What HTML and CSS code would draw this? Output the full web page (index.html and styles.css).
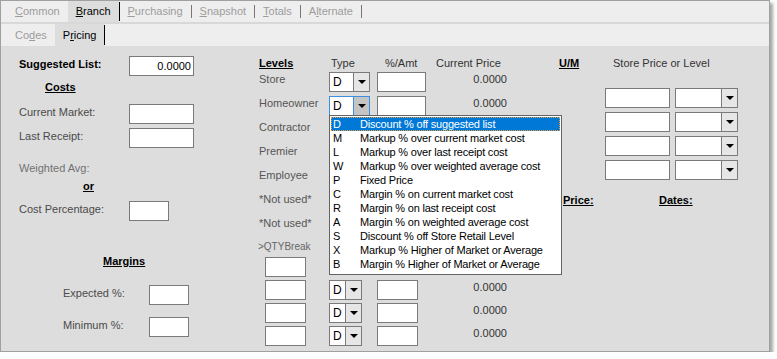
FILE: index.html
```html
<!DOCTYPE html>
<html lang="en">
<head>
    <meta charset="UTF-8">
    <title>Branch Pricing</title>
    <link rel="stylesheet" href="styles.css">
</head>
<body>
    <div class="window">
        <div class="tabs tabs-main">
            <span class="tab"><u>C</u>ommon</span>
            <span class="tab active"><u>B</u>ranch</span>
            <span class="sep dark"></span>
            <span class="tab"><u>P</u>urchasing</span>
            <span class="sep"></span>
            <span class="tab"><u>S</u>napshot</span>
            <span class="sep"></span>
            <span class="tab"><u>T</u>otals</span>
            <span class="sep"></span>
            <span class="tab">A<u>l</u>ternate</span>
            <span class="sep"></span>
        </div>
        <div class="tabs tabs-sub">
            <span class="tab">Co<u>d</u>es</span>
            <span class="tab active">P<u>r</u>icing</span>
            <span class="sep dark"></span>
        </div>

        <div class="content">
            <div class="costs">
                <div class="field">
                    <span class="lbl strong">Suggested List:</span>
                    <div class="box w65 num">0.0000</div>
                </div>
                <div class="heading costs-h">Costs</div>
                <div class="field mt10">
                    <span class="lbl">Current Market:</span>
                    <div class="box w65"></div>
                </div>
                <div class="field mt4">
                    <span class="lbl">Last Receipt:</span>
                    <div class="box w65"></div>
                </div>
                <div class="lbl faded wavg">Weighted Avg:</div>
                <div class="heading or-h">or</div>
                <div class="field mt8">
                    <span class="lbl">Cost Percentage:</span>
                    <div class="box w40"></div>
                </div>
                <div class="heading margins-h">Margins</div>
                <div class="field margin-field mt17">
                    <span class="lbl">Expected %:</span>
                    <div class="box w40"></div>
                </div>
                <div class="field margin-field mt12">
                    <span class="lbl">Minimum %:</span>
                    <div class="box w40"></div>
                </div>
            </div>

            <div class="levels">
                <div class="lv-head">
                    <span class="heading">Levels</span>
                    <span class="col-type">Type</span>
                    <span class="col-amt">%/Amt</span>
                    <span class="col-price">Current Price</span>
                </div>
                <div class="lv-row">
                    <span class="lv-lbl">Store</span>
                    <div class="combo"><span class="val">D</span><span class="btn"></span></div>
                    <div class="box"></div>
                    <span class="price">0.0000</span>
                </div>
                <div class="lv-row">
                    <span class="lv-lbl">Homeowner</span>
                    <div class="combo open">
                        <span class="val">D</span><span class="btn"></span>
                        <ul class="dropdown">
                            <li class="selected"><span class="code">D</span>Discount % off suggested list</li>
                            <li><span class="code">M</span>Markup % over current market cost</li>
                            <li><span class="code">L</span>Markup % over last receipt cost</li>
                            <li><span class="code">W</span>Markup % over weighted average cost</li>
                            <li><span class="code">P</span>Fixed Price</li>
                            <li><span class="code">C</span>Margin % on current market cost</li>
                            <li><span class="code">R</span>Margin % on last receipt cost</li>
                            <li><span class="code">A</span>Margin % on weighted average cost</li>
                            <li><span class="code">S</span>Discount % off Store Retail Level</li>
                            <li><span class="code">X</span>Markup % Higher of Market or Average</li>
                            <li><span class="code">B</span>Margin % Higher of Market or Average</li>
                        </ul>
                    </div>
                    <div class="box"></div>
                    <span class="price">0.0000</span>
                </div>
                <div class="lv-row covered">
                    <span class="lv-lbl">Contractor</span>
                    <div class="combo"><span class="val">D</span><span class="btn"></span></div>
                    <div class="box"></div>
                    <span class="price">0.0000</span>
                </div>
                <div class="lv-row covered">
                    <span class="lv-lbl">Premier</span>
                    <div class="combo"><span class="val">D</span><span class="btn"></span></div>
                    <div class="box"></div>
                    <span class="price">0.0000</span>
                </div>
                <div class="lv-row covered">
                    <span class="lv-lbl">Employee</span>
                    <div class="combo"><span class="val">D</span><span class="btn"></span></div>
                    <div class="box"></div>
                    <span class="price">0.0000</span>
                </div>
                <div class="lv-row covered">
                    <span class="lv-lbl">*Not used*</span>
                    <div class="combo"><span class="val">D</span><span class="btn"></span></div>
                    <div class="box"></div>
                    <span class="price">0.0000</span>
                </div>
                <div class="lv-row covered">
                    <span class="lv-lbl">*Not used*</span>
                    <div class="combo"><span class="val">D</span><span class="btn"></span></div>
                    <div class="box"></div>
                    <span class="price">0.0000</span>
                </div>
                <div class="qty-lbl">&gt;QTYBreak</div>
                <div class="lv-row qty first covered">
                    <div class="box qty-box"></div>
                    <div class="combo"><span class="val">D</span><span class="btn"></span></div>
                    <div class="box"></div>
                    <span class="price">0.0000</span>
                </div>
                <div class="lv-row qty">
                    <div class="box qty-box"></div>
                    <div class="combo"><span class="val">D</span><span class="btn"></span></div>
                    <div class="box"></div>
                    <span class="price">0.0000</span>
                </div>
                <div class="lv-row qty">
                    <div class="box qty-box"></div>
                    <div class="combo"><span class="val">D</span><span class="btn"></span></div>
                    <div class="box"></div>
                    <span class="price">0.0000</span>
                </div>
                <div class="lv-row qty">
                    <div class="box qty-box"></div>
                    <div class="combo"><span class="val">D</span><span class="btn"></span></div>
                    <div class="box"></div>
                    <span class="price">0.0000</span>
                </div>
            </div>

            <div class="um">
                <div class="um-head">
                    <span class="heading um-title">U/M</span>
                    <span>Store Price or Level</span>
                </div>
                <div class="um-rows">
                    <div class="um-row"><div class="box w65"></div><div class="combo"><span class="val"></span><span class="btn"></span></div></div>
                    <div class="um-row"><div class="box w65"></div><div class="combo"><span class="val"></span><span class="btn"></span></div></div>
                    <div class="um-row"><div class="box w65"></div><div class="combo"><span class="val"></span><span class="btn"></span></div></div>
                    <div class="um-row"><div class="box w65"></div><div class="combo"><span class="val"></span><span class="btn"></span></div></div>
                </div>
                <div class="promo-head">
                    <span class="heading price-h">Price:</span>
                    <span class="heading">Dates:</span>
                </div>
            </div>
        </div>
    </div>
</body>
</html>
```

FILE: styles.css
```css
* { margin: 0; padding: 0; box-sizing: border-box; }
body { background: #fff; font-family: "Liberation Sans", Arial, sans-serif; font-size: 11px; color: #333; }
u { text-decoration: underline; }

.window { width: 770px; height: 352px; border: 1px solid #a0a0a0; background: #dddddd; box-shadow: 3px 3px 3px rgba(0, 0, 0, 0.35); display: flex; flex-direction: column; }

/* tab strips */
.tabs { display: flex; background: #eeeeee; padding-left: 6px; }
.tabs-main { height: 23px; border-bottom: 2px solid #d8d8d8; }
.tabs-sub { height: 22px; }
.tab { padding: 0 8px; color: #9c9c9c; line-height: 21px; white-space: nowrap; }
.tabs-sub .tab { line-height: 22px; }
.tab.active { background: #dddddd; color: #000; }
.sep { width: 1px; background: #777; margin: 4px 0; }
.sep.dark { background: #000; margin: 1px 0; }

.content { flex: 1; display: flex; }

.heading { font-weight: bold; text-decoration: underline; color: #000; line-height: 14px; white-space: nowrap; }

/* left: costs / margins */
.costs { width: 258px; padding: 10px 0 0 18px; }
.field { display: flex; height: 20px; }
.lbl { width: 110px; padding-top: 1px; line-height: 14px; color: #4a4a4a; white-space: nowrap; }
.lbl.strong { font-weight: bold; color: #000; }
.faded { color: #727272; }
.box { height: 20px; border: 1px solid #7a7a7a; background: #fff; }
.w65 { width: 65px; }
.w40 { width: 40px; }
.num { text-align: right; padding: 2px 2px 0 0; color: #000; line-height: 14px; }
.mt4 { margin-top: 4px; }
.mt8 { margin-top: 8px; }
.mt10 { margin-top: 10px; }
.mt12 { margin-top: 12px; }
.mt17 { margin-top: 17px; }
.costs-h { margin: 4px 0 0 26px; }
.wavg { margin-top: 12px; }
.or-h { margin: 4px 0 0 64px; }
.margins-h { margin: 33px 0 0 84px; }
.margin-field { padding-left: 44px; }
.margin-field .lbl { width: 86px; }

/* middle: price levels */
.levels { width: 300px; padding-top: 10px; }
.lv-head, .lv-row { display: grid; grid-template-columns: 70px 48px 49px 82px; }
.lv-head { height: 14px; line-height: 14px; }
.col-type { padding-left: 2px; }
.col-amt { padding-left: 8px; }
.col-price { padding-left: 10px; white-space: nowrap; }
.lv-row { height: 20px; margin-top: 4px; }
.lv-head + .lv-row { margin-top: 2px; }
.lv-lbl { line-height: 14px; color: #555; white-space: nowrap; }
.lv-row .combo { width: 41px; }
.price { text-align: right; padding-right: 1px; line-height: 14px; color: #333; }
.qty-lbl { margin: 4px 0 0 -1px; height: 13px; line-height: 13px; font-size: 10px; color: #666; }
.lv-row.qty { margin-top: 3px; }
.lv-row.qty.first { margin-top: 4px; }
.qty-box { width: 41px; margin-left: 6px; }
.lv-row.qty .combo { width: 33px; }
.lv-row.qty .box:not(.qty-box) { width: 41px; }
/* rows behind the open list */
.covered .combo, .covered .box:not(.qty-box), .covered .price { visibility: hidden; }

/* combo boxes */
.combo { display: flex; height: 20px; border: 1px solid #7a7a7a; background: #fff; position: relative; }
.combo .val { flex: 1; padding: 2px 0 0 3px; line-height: 14px; color: #000; font-size: 12px; }
.combo .btn { width: 16px; border-left: 1px solid #7a7a7a; background: #e6e6e6; display: flex; align-items: center; justify-content: center; }
.combo .btn::after { content: ""; border-left: 4px solid transparent; border-right: 4px solid transparent; border-top: 4px solid #000; }
.combo.open { border-color: #3d8ee0; }
.combo.open .btn { background: #c4c4c4; border-left-color: #3d8ee0; }

/* open list */
.dropdown { position: absolute; top: 100%; left: -1px; width: 233px; list-style: none; background: #fff; border: 1px solid #646464; padding: 1px 1px 3px; z-index: 10; visibility: visible; }
.dropdown li { display: flex; height: 14px; line-height: 14px; color: #000; white-space: nowrap; letter-spacing: -0.2px; }
.dropdown .code { width: 29px; padding-left: 2px; letter-spacing: 0; }
.dropdown li.selected { background: #0078d7; color: #fff; outline: 1px dotted #f0a030; outline-offset: -1px; }

/* right: unit of measure */
.um { flex: 1; padding-top: 10px; }
.um-head { display: flex; height: 14px; line-height: 14px; }
.um-title { width: 54px; }
.um-rows { padding-left: 46px; margin-top: 18px; display: flex; flex-direction: column; gap: 4px; }
.um-row { display: flex; gap: 5px; }
.um-row .combo { width: 63px; }
.promo-head { display: flex; margin: 13px 0 0 4px; }
.price-h { width: 96px; }
```
